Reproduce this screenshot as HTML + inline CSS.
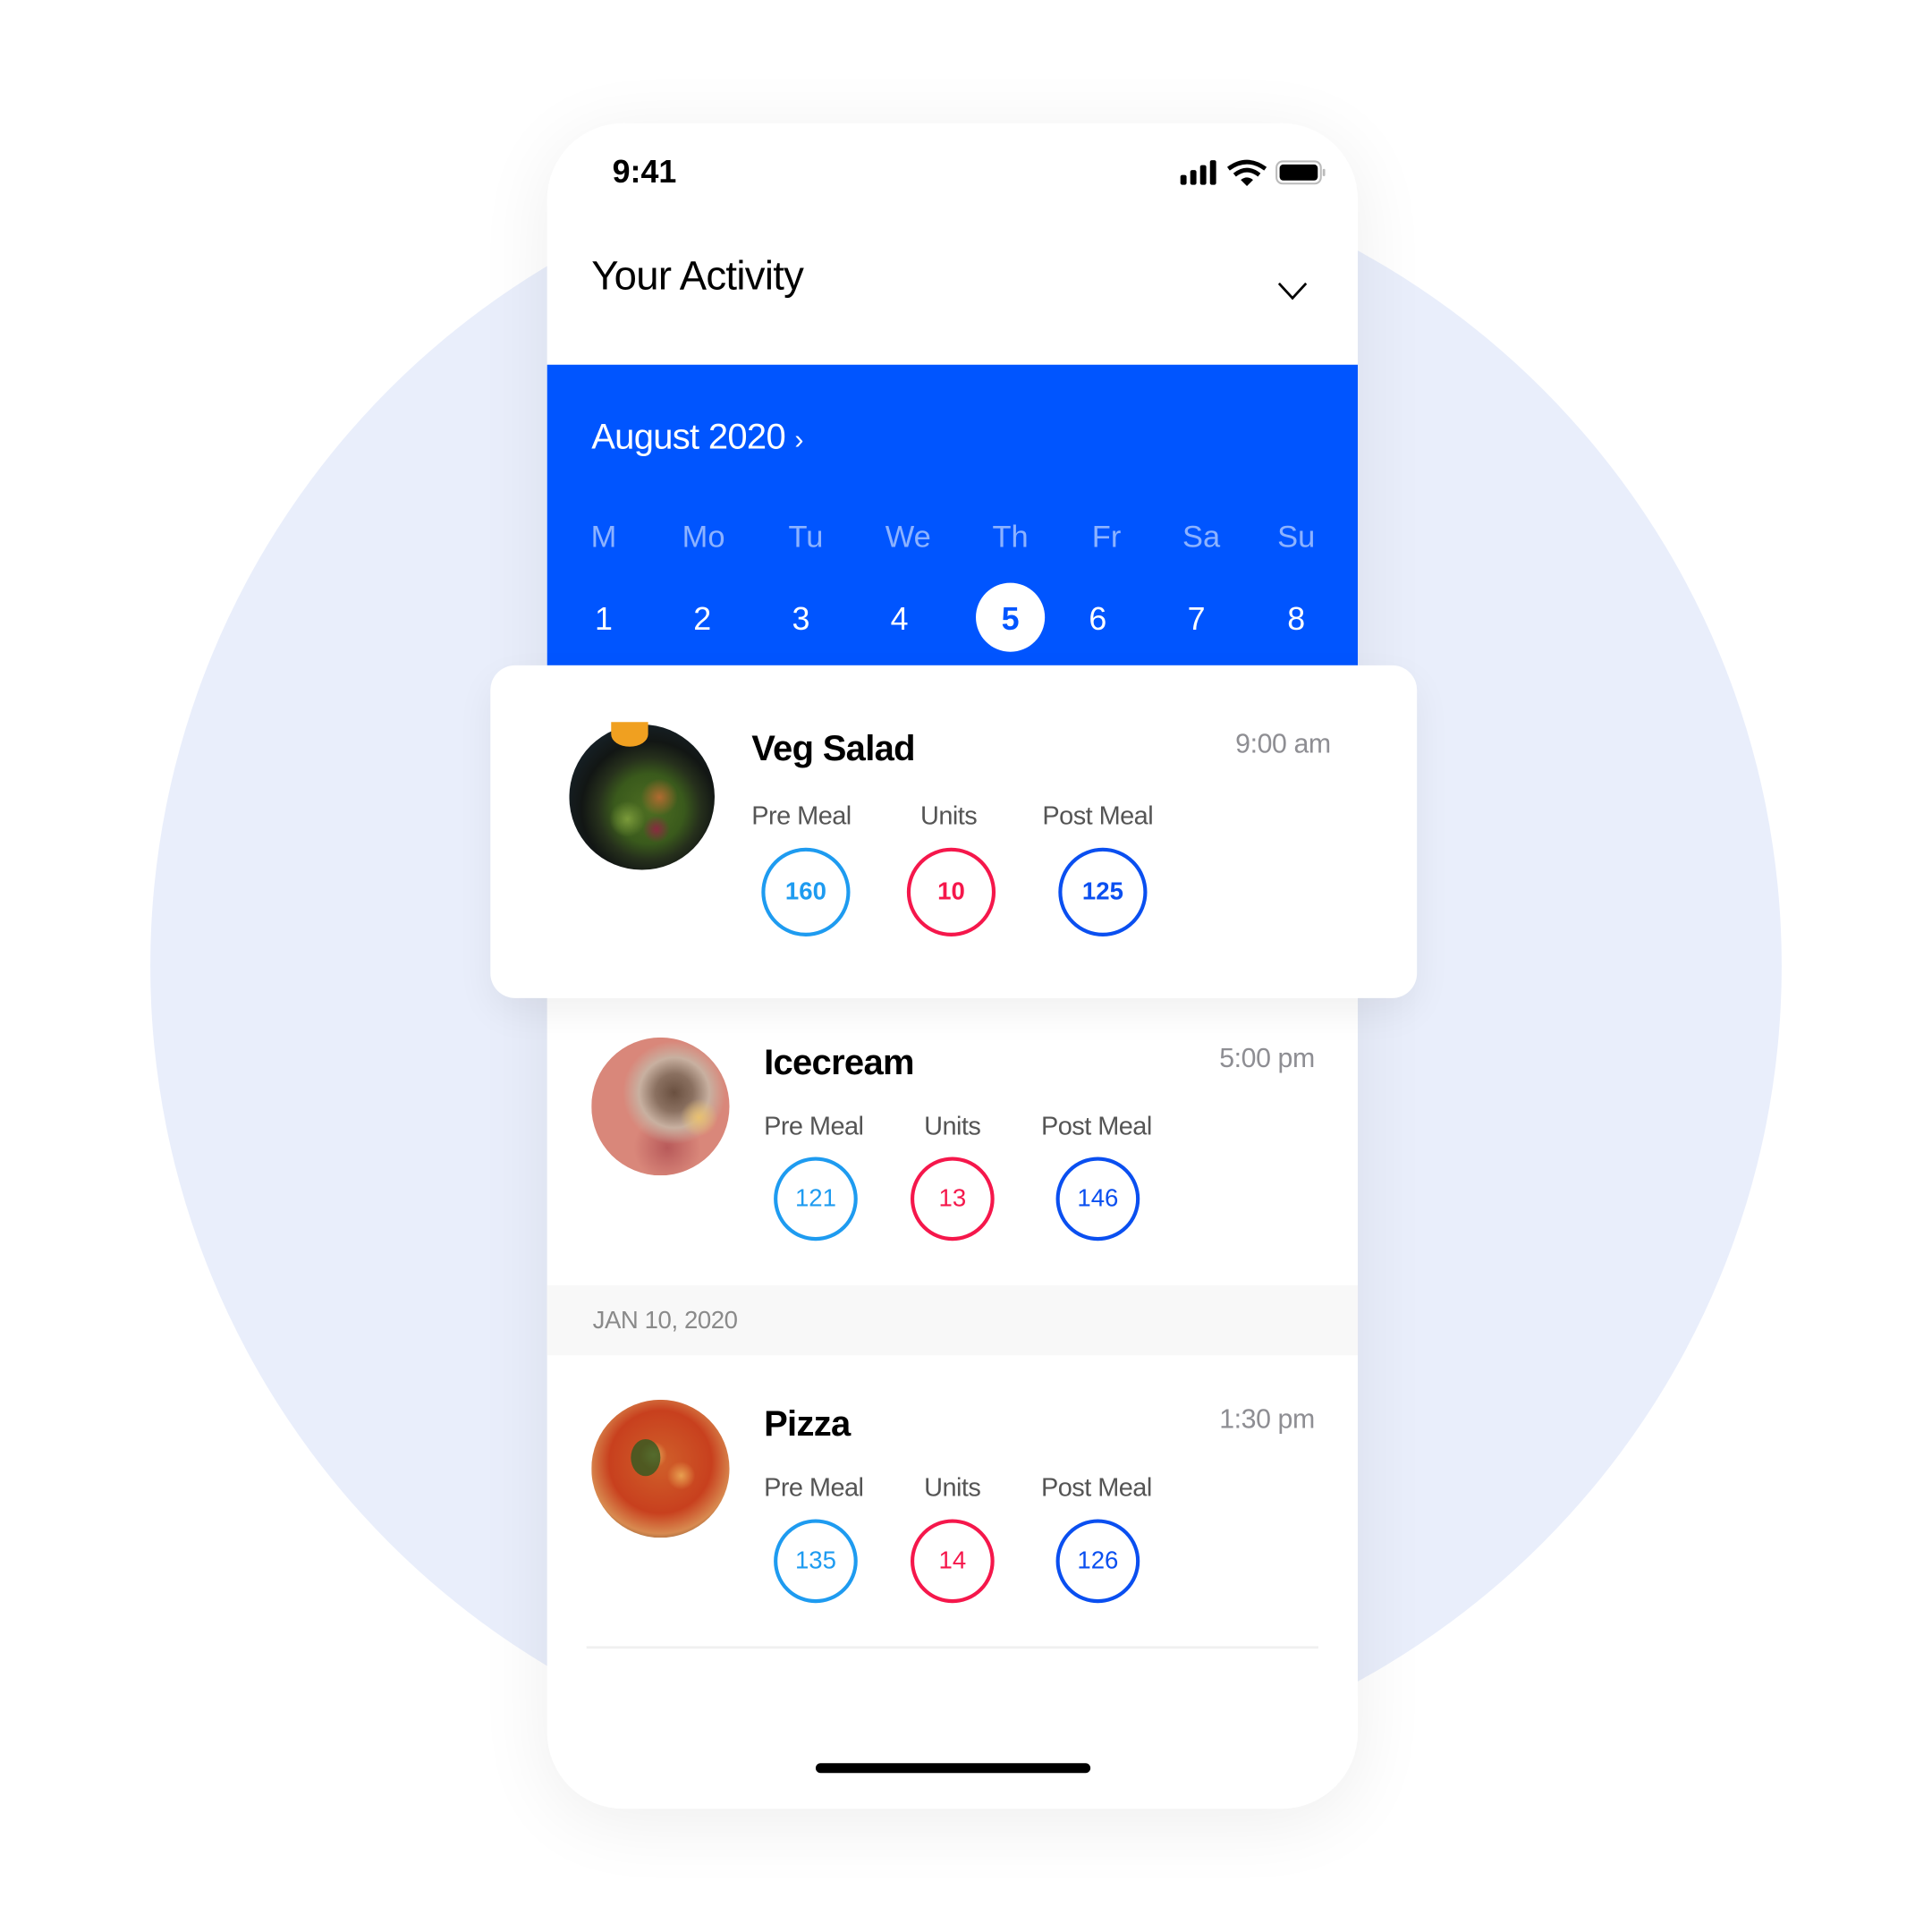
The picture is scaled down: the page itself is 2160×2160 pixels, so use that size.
<!DOCTYPE html>
<html><head><meta charset="utf-8"><style>
*{margin:0;padding:0;box-sizing:border-box}
html,body{width:2160px;height:2160px;background:#fff;overflow:hidden;font-family:"Liberation Sans",sans-serif}
#s{position:absolute;left:0;top:0;width:1568px;height:1568px;transform:scale(1.37755);transform-origin:0 0}
.a{position:absolute;white-space:nowrap;line-height:0}
.c{position:absolute;border-radius:50%}
.ring{position:absolute;border-radius:50%;border:3px solid;display:flex;align-items:center;justify-content:center;font-weight:bold;font-size:20px}
.lbl{font-size:21px;color:#555;letter-spacing:-0.4px}
.ttl{font-size:29px;font-weight:bold;color:#000;letter-spacing:-0.5px}
.tm{font-size:22px;color:#8e8e93;letter-spacing:-0.3px}
</style></head><body><div id="s">
<div class="c" style="left:122px;top:122px;width:1324px;height:1324px;background:#e9eefb"></div>
<div style="position:absolute;left:444px;top:100px;width:658px;height:1368px;background:#fff;border-radius:62px;box-shadow:0 10px 60px rgba(0,0,0,0.07);overflow:hidden">
  <div style="position:absolute;left:0;top:196px;width:658px;height:244px;background:#0055ff"></div>
  <div style="position:absolute;left:0;top:943px;width:658px;height:57px;background:#f8f8f8"></div>
  <div style="position:absolute;left:32px;top:1236px;width:594px;height:2px;background:#f0f0f0"></div>
</div>
<div class="a" style="left:497px;top:139px;font-size:26px;font-weight:bold">9:41</div>
<svg style="position:absolute;left:956px;top:128px" width="122" height="24" viewBox="0 0 122 24">
<rect x="2" y="14" width="5" height="8" rx="1.5"/><rect x="10" y="10" width="5" height="12" rx="1.5"/><rect x="18" y="6" width="5" height="16" rx="1.5"/><rect x="26" y="2" width="5" height="20" rx="1.5"/>
<path d="M41 9 Q56 -2 71 9" stroke="#000" stroke-width="3.5" fill="none"/><path d="M46 14 Q56 6 66 14" stroke="#000" stroke-width="3.5" fill="none"/><path d="M51 18 L56 23 L61 18 Q56 14 51 18Z"/>
<rect x="80" y="3" width="36" height="18" rx="5" fill="none" stroke="#bbb" stroke-width="1.5"/><rect x="82.5" y="5.5" width="31" height="13" rx="3"/><rect x="117.5" y="9" width="2" height="6" rx="1" fill="#bbb"/>
</svg>
<div class="a" style="left:480px;top:224px;font-size:33px;color:#000;letter-spacing:-0.5px">Your Activity</div>
<svg style="position:absolute;left:1036px;top:228px" width="26" height="16"><path d="M2 2 L13 14 L24 2" stroke="#000" stroke-width="2" fill="none"/></svg>
<div class="a" style="left:480px;top:355px;font-size:29px;color:#fff;letter-spacing:-0.5px">August 2020 <span style="font-size:22px">›</span></div>
<div style="position:absolute;left:0;top:436px;font-size:25px;color:rgba(255,255,255,0.55)">
<div class="a" style="left:490px;transform:translateX(-50%)">M</div><div class="a" style="left:571px;transform:translateX(-50%)">Mo</div><div class="a" style="left:654px;transform:translateX(-50%)">Tu</div><div class="a" style="left:737px;transform:translateX(-50%)">We</div><div class="a" style="left:820px;transform:translateX(-50%)">Th</div><div class="a" style="left:898px;transform:translateX(-50%)">Fr</div><div class="a" style="left:975px;transform:translateX(-50%)">Sa</div><div class="a" style="left:1052px;transform:translateX(-50%)">Su</div>
</div>
<div class="c" style="left:792px;top:473px;width:56px;height:56px;background:#fff"></div>
<div style="position:absolute;left:0;top:502px;font-size:26px;color:#fff">
<div class="a" style="left:490px;transform:translateX(-50%)">1</div><div class="a" style="left:570px;transform:translateX(-50%)">2</div><div class="a" style="left:650px;transform:translateX(-50%)">3</div><div class="a" style="left:730px;transform:translateX(-50%)">4</div><div class="a" style="left:820px;transform:translateX(-50%);color:#0055ff;font-weight:bold">5</div><div class="a" style="left:891px;transform:translateX(-50%)">6</div><div class="a" style="left:971px;transform:translateX(-50%)">7</div><div class="a" style="left:1052px;transform:translateX(-50%)">8</div>
</div>
<div style="position:absolute;left:398px;top:540px;width:752px;height:270px;background:#fff;border-radius:20px;box-shadow:0 12px 30px rgba(0,0,0,0.06)"></div>
<!-- salad -->
<div class="c" style="left:462px;top:588px;width:118px;height:118px;background:radial-gradient(circle at 40% 65%,#7a9a3a 0,transparent 14%),radial-gradient(circle at 62% 50%,#b06a30 0,transparent 16%),radial-gradient(circle at 60% 72%,#8a2a40 0,transparent 10%),radial-gradient(circle at 55% 58%,#4e6e22 0,#3a5a1c 30%,#26301c 44%,#121614 58%,#1c2f40 100%)"></div>
<div class="c" style="left:496px;top:586px;width:30px;height:20px;background:#f0a020;border-radius:0 0 50% 50%"></div>
<div class="a ttl" style="left:610px;top:608px">Veg Salad</div>
<div class="a tm" style="right:488px;top:604px">9:00 am</div>
<div class="a lbl" style="left:610px;top:663px">Pre Meal</div><div class="a lbl" style="left:747px;top:663px">Units</div><div class="a lbl" style="left:846px;top:663px">Post Meal</div>
<div class="ring" style="left:618px;top:688px;width:72px;height:72px;border-color:#1e9bf0;color:#1e9bf0">160</div>
<div class="ring" style="left:736px;top:688px;width:72px;height:72px;border-color:#f5174b;color:#f5174b">10</div>
<div class="ring" style="left:859px;top:688px;width:72px;height:72px;border-color:#0a4ff0;color:#0a4ff0">125</div>
<!-- icecream -->
<div class="c" style="left:480px;top:842px;width:112px;height:112px;background:radial-gradient(circle at 78% 58%,#e8c070 0,transparent 14%),radial-gradient(circle at 60% 40%,#6a5040 0,#8a7060 16%,#c8b0a0 30%,transparent 44%),radial-gradient(circle at 55% 80%,#b85a5a 0,transparent 25%),#d9877a"></div>
<div class="a ttl" style="left:620px;top:863px">Icecream</div>
<div class="a tm" style="right:501px;top:859px">5:00 pm</div>
<div class="a lbl" style="left:620px;top:915px">Pre Meal</div><div class="a lbl" style="left:750px;top:915px">Units</div><div class="a lbl" style="left:845px;top:915px">Post Meal</div>
<div class="ring" style="left:628px;top:939px;width:68px;height:68px;border-color:#1e9bf0;color:#1e9bf0;font-weight:normal">121</div>
<div class="ring" style="left:739px;top:939px;width:68px;height:68px;border-color:#f5174b;color:#f5174b;font-weight:normal">13</div>
<div class="ring" style="left:857px;top:939px;width:68px;height:68px;border-color:#0a4ff0;color:#0a4ff0;font-weight:normal">146</div>
<div class="a" style="left:481px;top:1072px;font-size:20px;color:#8a8a8a;letter-spacing:-0.3px">JAN 10, 2020</div>
<!-- pizza -->
<div class="c" style="left:480px;top:1136px;width:112px;height:112px;background:radial-gradient(circle at 45% 40%,#e8b060 0,transparent 12%),radial-gradient(circle at 65% 55%,#e8a050 0,transparent 12%),radial-gradient(circle at 50% 45%,#d0602a 0,#c8401e 50%,#d88a50 70%,#6a4a2a 85%,#c8b8a0 100%)"></div>
<div class="c" style="left:512px;top:1168px;width:24px;height:30px;background:#2f5a20;opacity:.8"></div>
<div class="a ttl" style="left:620px;top:1156px">Pizza</div>
<div class="a tm" style="right:501px;top:1152px">1:30 pm</div>
<div class="a lbl" style="left:620px;top:1208px">Pre Meal</div><div class="a lbl" style="left:750px;top:1208px">Units</div><div class="a lbl" style="left:845px;top:1208px">Post Meal</div>
<div class="ring" style="left:628px;top:1233px;width:68px;height:68px;border-color:#1e9bf0;color:#1e9bf0;font-weight:normal">135</div>
<div class="ring" style="left:739px;top:1233px;width:68px;height:68px;border-color:#f5174b;color:#f5174b;font-weight:normal">14</div>
<div class="ring" style="left:857px;top:1233px;width:68px;height:68px;border-color:#0a4ff0;color:#0a4ff0;font-weight:normal">126</div>
<div style="position:absolute;left:662px;top:1431px;width:223px;height:8px;border-radius:4px;background:#000"></div>
</div></body></html>
